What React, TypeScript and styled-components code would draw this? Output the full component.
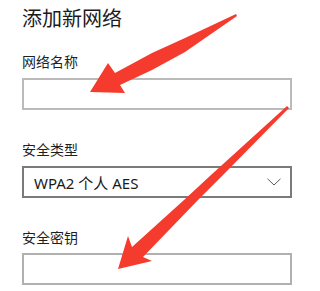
import React from "react";
import styled, { createGlobalStyle } from "styled-components";

const GlobalStyle = createGlobalStyle`
  html, body {
    margin: 0;
    padding: 0;
    background: #ffffff;
  }
  body {
    font-family: "Noto Sans", "Noto Sans CJK SC", sans-serif;
    color: #1f1f1f;
  }
`;

const Page = styled.div`
  position: relative;
  width: 313px;
  height: 291px;
  overflow: hidden;
  background: #fff;
`;

const Form = styled.div`
  display: flex;
  flex-direction: column;
  padding: 4px 0 0 22px;
  width: 270px;
`;

const Title = styled.div`
  font-family: "Noto Sans CJK SC", sans-serif;
  font-size: 20px;
  line-height: 28px;
  color: #1a1a1a;
  margin-bottom: 19px;
`;

const Field = styled.div<{ $gap: number }>`
  display: flex;
  flex-direction: column;
  gap: ${(p) => p.$gap}px;
  margin-bottom: 29px;
`;

const Label = styled.label`
  font-family: "Noto Sans CJK SC", sans-serif;
  font-size: 14px;
  line-height: 20px;
  color: #1f1f1f;
`;

const TextBox = styled.div<{ $border: string }>`
  box-sizing: border-box;
  height: 32px;
  width: 270px;
  border: 2px solid ${(p) => p.$border};
  background: #fff;
`;

const Select = styled.div`
  box-sizing: border-box;
  height: 32px;
  width: 270px;
  border: 2px solid #7a7a7a;
  display: flex;
  align-items: center;
  justify-content: space-between;
  padding: 0 9px 0 10px;
  font-family: "Noto Sans", "Noto Sans CJK SC", sans-serif;
  font-size: 15px;
  color: #1a1a1a;
`;

const Overlay = styled.svg`
  position: absolute;
  left: 0;
  top: 0;
  pointer-events: none;
`;

const Chevron = () => (
  <svg width="14" height="8" viewBox="0 0 14 8">
    <path d="M0.5 0.8 L7 7 L13.5 0.8" fill="none" stroke="#5a5a5a" strokeWidth="1" />
  </svg>
);

export default function App() {
  return (
    <Page>
      <GlobalStyle />
      <Form>
        <Title>添加新网络</Title>
        <Field $gap={7}>
          <Label>网络名称</Label>
          <TextBox $border="#bababa" />
        </Field>
        <Field $gap={7}>
          <Label>安全类型</Label>
          <Select>
            <span>WPA2 个人 AES</span>
            <Chevron />
          </Select>
        </Field>
        <Field $gap={6}>
          <Label>安全密钥</Label>
          <TextBox $border="#b0b0b0" />
        </Field>
      </Form>
      <Overlay width="313" height="291" viewBox="0 0 313 291">
        <polygon
          fill="#f43b2e"
          points="236,14 185,38 152,53 115,73 108,63 90,92 125,93 120,85 152,70 185,52 237,16"
        />
        <polygon
          fill="#f43b2e"
          points="287,106 211,175 184,200 132,247 128,236 118,269 152,261 143,257 198,200 223,175 289,108"
        />
      </Overlay>
    </Page>
  );
}
